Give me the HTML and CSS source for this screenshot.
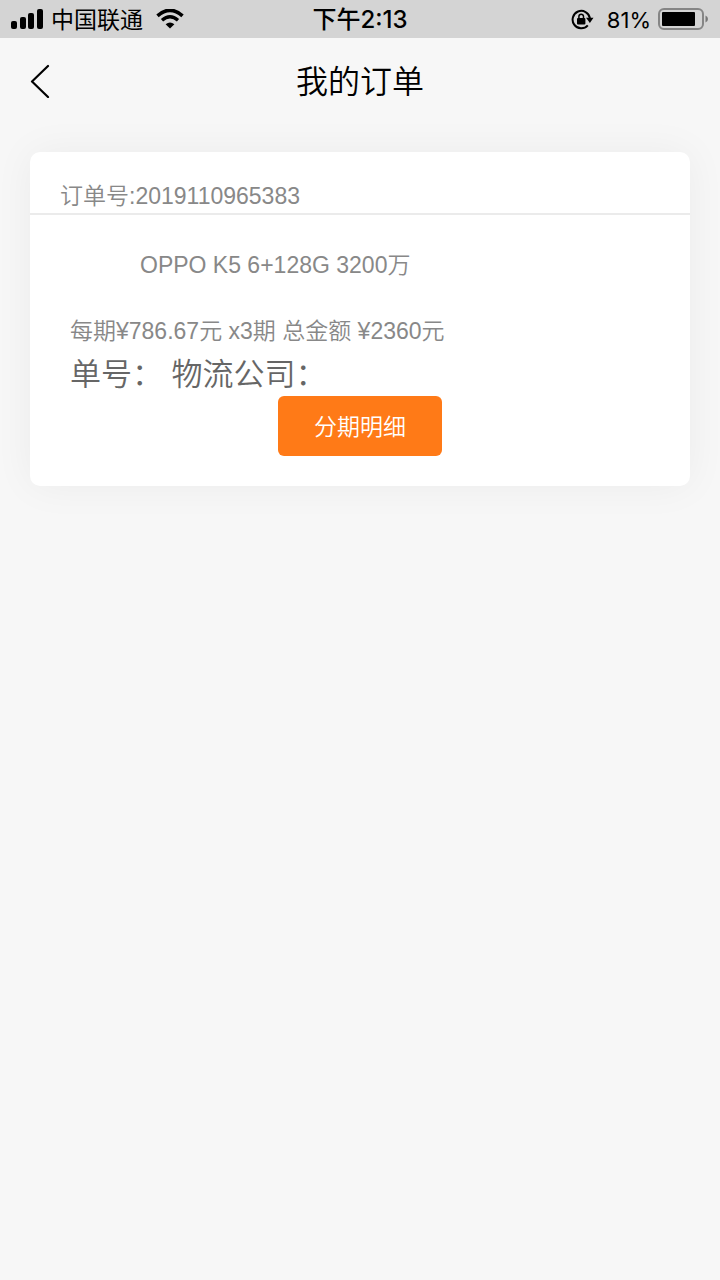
FILE: index.html
```html
<!DOCTYPE html>
<html lang="zh-CN">
<head>
<meta charset="utf-8">
<meta name="viewport" content="width=device-width, initial-scale=1">
<title>我的订单</title>
<link rel="stylesheet" href="styles.css">
</head>
<body>
<div class="status">
  <div class="status-left">
    <svg class="signal" width="33" height="20" viewBox="0 0 33 20" aria-hidden="true">
      <rect x="0" y="12" width="6" height="8" rx="2"/>
      <rect x="9" y="8" width="6" height="12" rx="2"/>
      <rect x="17" y="4" width="6" height="16" rx="2"/>
      <rect x="26" y="0" width="6" height="20" rx="2"/>
    </svg>
    <span class="carrier">中国联通</span>
    <svg class="wifi" width="28" height="20" viewBox="0 0 28 20" aria-hidden="true">
      <path d="M1.500 6.800Q14-4.200 26.500 6.800" fill="none" stroke="#000" stroke-width="3.600"/>
      <path d="M6 11.300Q14 4.300 22 11.300" fill="none" stroke="#000" stroke-width="3.400"/>
      <path d="M14 19.500L9.600 15.200Q14 11.800 18.400 15.200Z"/>
    </svg>
  </div>
  <div class="time">下午2:13</div>
  <div class="status-right">
    <svg width="23" height="21" viewBox="0 0 23 21" aria-hidden="true">
      <path d="M16.800 16.400A8.700 8.700 0 1 1 18.900 9.200" fill="none" stroke="#000" stroke-width="2"/>
      <path d="M15 8.800H22.500L18.900 14Z"/>
      <rect x="6" y="9" width="8.400" height="6.400" rx="1"/>
      <path d="M7.900 9.500V7.500a2.300 2.300 0 0 1 4.600 0v2" fill="none" stroke="#000" stroke-width="1.500"/>
    </svg>
    <span class="percent">81%</span>
    <svg width="51" height="22" viewBox="0 0 51 22" aria-hidden="true">
      <rect x="1" y="1" width="44" height="20" rx="5" fill="none" stroke="#858585" stroke-width="2"/>
      <rect x="4" y="4" width="33" height="14" rx="1"/>
      <path d="M47.500 7.500Q50 8.500 50 11T47.500 14.500Z" fill="#777"/>
    </svg>
  </div>
</div>
<header class="nav">
  <button class="back" type="button" aria-label="返回">
    <svg width="20" height="34" viewBox="0 0 20 34" aria-hidden="true">
      <path d="M18 2L2 17.500L18 33" fill="none" stroke="#000" stroke-width="2.200" stroke-linecap="round" stroke-linejoin="round"/>
    </svg>
  </button>
  <h1 class="title">我的订单</h1>
</header>
<main class="orders">
  <article class="card">
    <p class="order-no">订单号:2019110965383</p>
    <div class="detail">
      <p class="product">OPPO K5 6+128G 3200万</p>
      <p class="price">每期¥786.67元 x3期 总金额 ¥2360元</p>
      <p class="shipping">单号： 物流公司：</p>
      <button class="plan" type="button">分期明细</button>
    </div>
  </article>
</main>
</body>
</html>
```
FILE: styles.css
```css
* {
  box-sizing: border-box;
}

body {
  margin: 0;
  min-height: 100vh;
  background: #f7f7f7;
  color: #000;
  font-family: "Liberation Sans", "Noto Sans CJK SC", sans-serif;
}

h1,
p {
  margin: 0;
  font-weight: 350;
}

.status {
  display: grid;
  grid-template-columns: 1fr auto 1fr;
  align-items: center;
  height: 38px;
  padding: 0 11px;
  background: #d4d4d4;
  font-family: Inter, "Noto Sans CJK SC", sans-serif;
  font-size: 23px;
  line-height: 36px;
}

.status-left,
.status-right {
  display: flex;
  align-items: center;
}

.status-right {
  justify-content: flex-end;
}

.carrier {
  margin: 0 13px 0 7px;
  padding-top: 2px;
}

.time {
  padding-top: 2px;
  font-size: 24px;
  font-weight: 500;
}

.percent {
  margin: 0 7px 0 13px;
  padding-top: 2px;
  font-size: 22px;
}

.nav {
  display: grid;
  grid-template-columns: 1fr auto 1fr;
  align-items: center;
  height: 86px;
  padding: 0 30px;
}

.back {
  justify-self: start;
  display: flex;
  padding: 0;
  border: 0;
  background: none;
}

.title {
  padding-top: 2px;
  font-size: 32px;
  line-height: 48px;
}

.orders {
  padding: 28px 30px;
}

.card {
  border-radius: 10px;
  background: #fff;
  box-shadow: 0 0 40px rgba(0, 0, 0, 0.05);
  color: #888;
  font-size: 23px;
}

.order-no {
  padding: 28px 30px 0;
  border-bottom: 2px solid #ebebeb;
  line-height: 33px;
}

.detail {
  display: flex;
  flex-direction: column;
  padding: 32px 40px 30px;
}

.product {
  padding-left: 70px;
  line-height: 36px;
}

.price {
  margin-top: 30px;
  line-height: 36px;
}

.shipping {
  padding-top: 5px;
  color: #666;
  font-size: 31px;
  line-height: 42px;
}

.plan {
  align-self: center;
  height: 60px;
  padding: 0 36px 2px;
  border: 0;
  border-radius: 6px;
  background: #ff7a17;
  color: #fff;
  font: inherit;
  font-weight: 350;
}
```
